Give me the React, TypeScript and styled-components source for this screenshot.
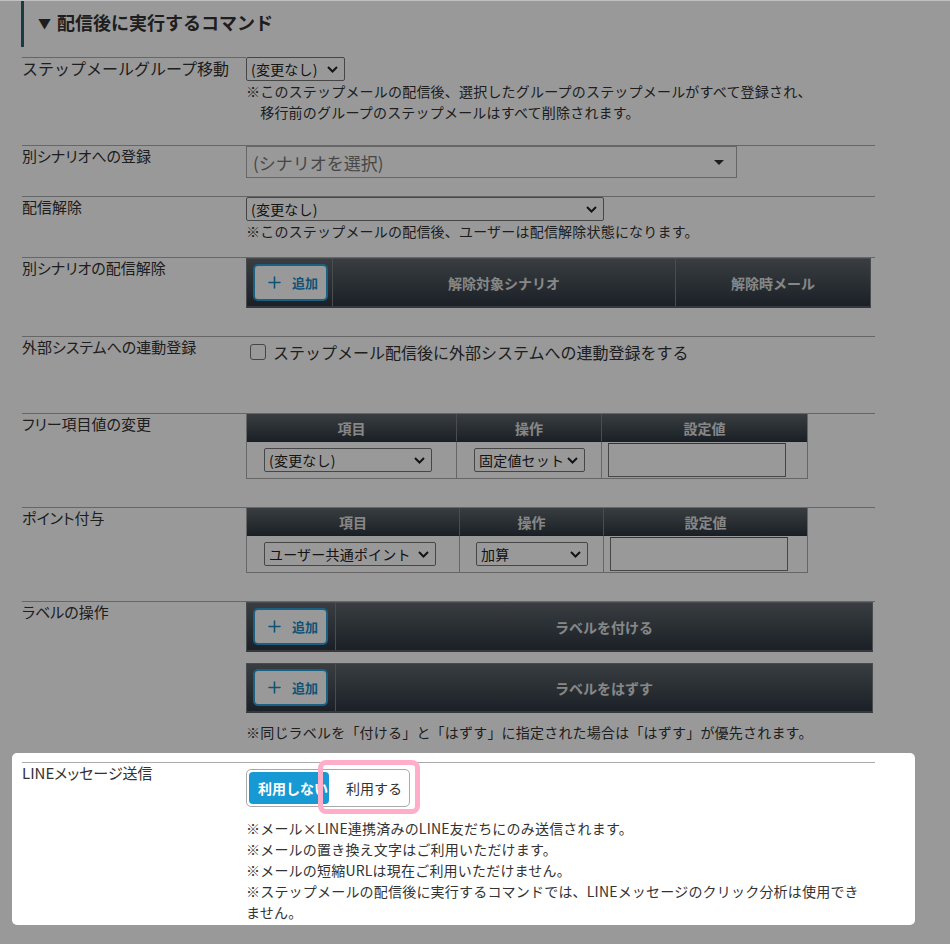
import React from "react";
import styled, { createGlobalStyle } from "styled-components";
import { Plus } from "lucide-react";

const Global = createGlobalStyle`
  html, body { margin: 0; padding: 0; background: #fff; }
  body {
    font-family: "Noto Sans CJK JP", "Noto Sans", sans-serif;
    color: #333;
  }
  #root { min-height: 944px; }
`;

const TopEdge = styled.div`
  position: relative;
  z-index: 2;
  height: 1px;
  background: #c0c0c0;
`;

const Page = styled.div`
  width: 853px;
  margin-left: 22px;
  padding-bottom: 20px;
`;

const Heading = styled.h2`
  margin: 0 0 10px -1px;
  height: 46px;
  box-sizing: border-box;
  border-left: 3px solid #31606e;
  padding: 0 0 4px 14px;
  display: flex;
  align-items: center;
  gap: 6px;
  font-size: 18px;
  font-weight: bold;
  color: #333;
  line-height: 1;
`;

const Tri = styled.span`
  font-size: 13px;
  color: #333;
`;

const Row = styled.div<{ $pb: number; $noLine?: boolean }>`
  display: grid;
  grid-template-columns: 224px 1fr;
  border-top: ${(p) => (p.$noLine ? "none" : "1px solid #aaa")};
  padding-bottom: ${(p) => p.$pb}px;
`;

const Label = styled.div<{ $big?: boolean; $line?: boolean }>`
  font-size: ${(p) => (p.$big ? 16 : 15)}px;
  font-feature-settings: ${(p) => (p.$big ? "normal" : '"palt"')};
  line-height: 20px;
  padding-top: 0;
  color: #333;
  border-top: ${(p) => (p.$line ? "1px solid #aaa" : "none")};
`;

const Cell = styled.div<{ $pt?: number }>`
  padding-top: ${(p) => p.$pt ?? 0}px;
  display: flex;
  flex-direction: column;
  align-items: flex-start;
`;

const SelectBox = styled.div<{ $w: number }>`
  box-sizing: border-box;
  width: ${(p) => p.$w}px;
  height: 24px;
  border: 1px solid #767676;
  border-radius: 2px;
  background: #fff;
  display: flex;
  align-items: center;
  justify-content: space-between;
  padding: 0 6px 0 4px;
  font-size: 14px;
  letter-spacing: 0.2px;
  color: #222;
  white-space: nowrap;
  overflow: hidden;
`;

const Select2Box = styled.div`
  box-sizing: border-box;
  width: 491px;
  height: 32px;
  border: 1px solid #aaa;
  background: #fff;
  display: flex;
  align-items: center;
  justify-content: space-between;
  padding: 0 12px 0 6px;
  font-size: 17px;
  color: #777;
`;

const Caret = styled.span`
  width: 0;
  height: 0;
  border-left: 5px solid transparent;
  border-right: 5px solid transparent;
  border-top: 5px solid #333;
`;

const Note = styled.div<{ $mt?: number }>`
  margin-top: ${(p) => p.$mt ?? 0}px;
  font-size: 14px;
  letter-spacing: 0.2px;
  line-height: 21px;
  color: #333;
`;

const CheckLine = styled.label`
  display: flex;
  align-items: center;
  gap: 7px;
  padding-left: 4px;
  font-size: 16px;
  line-height: 24px;
  color: #333;
`;

const CheckBox = styled.span`
  box-sizing: border-box;
  width: 16px;
  height: 16px;
  border: 1.5px solid #767676;
  border-radius: 3px;
  background: #fff;
`;

const DarkBar = styled.div<{ $cols: string; $w: number }>`
  box-sizing: border-box;
  width: ${(p) => p.$w}px;
  height: 50px;
  display: grid;
  grid-template-columns: ${(p) => p.$cols};
  background: linear-gradient(#60676d, #2c3740);
  border: 1px solid #7a7f84;
  border-bottom: 2px solid #5a5f63;
`;

const DarkCell = styled.div<{ $first?: boolean }>`
  display: flex;
  align-items: center;
  justify-content: ${(p) => (p.$first ? "flex-start" : "center")};
  padding-left: ${(p) => (p.$first ? 6 : 0)}px;
  border-left: ${(p) => (p.$first ? "none" : "1px solid #7c8186")};
  color: #e2e2e2;
  font-size: 14px;
  font-weight: bold;
`;

const AddButton = styled.button`
  box-sizing: border-box;
  width: 75px;
  height: 37px;
  border: 2px solid #2aa1db;
  border-radius: 5px;
  background: #fff;
  color: #1c8bc4;
  display: flex;
  align-items: center;
  justify-content: center;
  gap: 8px;
  padding: 0 0 0 2px;
  font-family: inherit;
  font-size: 13px;
  font-weight: bold;
  cursor: pointer;
`;

const BarStack = styled.div`
  display: flex;
  flex-direction: column;
  gap: 11px;
`;

const SmallTable = styled.div<{ $cols: string }>`
  box-sizing: border-box;
  width: 562px;
  display: grid;
  grid-template-columns: ${(p) => p.$cols};
  border-left: 1px solid #aaa;
  border-right: 1px solid #aaa;
`;

const HeadCell = styled.div<{ $first?: boolean }>`
  height: 27px;
  display: flex;
  align-items: center;
  justify-content: center;
  background: linear-gradient(#60676d, #2c3740);
  border-left: ${(p) => (p.$first ? "none" : "1px solid #7c8186")};
  border-bottom: 1px solid #2a3238;
  color: #e2e2e2;
  font-size: 14px;
  font-weight: bold;
`;

const BodyCell = styled.div<{ $first?: boolean; $pl: number }>`
  box-sizing: border-box;
  height: 37px;
  display: flex;
  align-items: center;
  justify-content: flex-start;
  padding-left: ${(p) => p.$pl}px;
  border-left: ${(p) => (p.$first ? "none" : "1px solid #aaa")};
  border-bottom: 1px solid #aaa;
  background: #fff;
`;

const TextInput = styled.div`
  box-sizing: border-box;
  width: 178px;
  height: 34px;
  border: 1px solid #767676;
  border-top-color: #555;
  background: #fff;
`;

const Spotlight = styled.div`
  position: relative;
  z-index: 1;
  margin-left: -10px;
  width: 903px;
  box-sizing: border-box;
  padding: 9px 40px 2px 10px;
  background: #fff;
  border-radius: 5px;
  box-shadow: 0 0 0 4000px rgba(0, 0, 0, 0.4);
`;

const Toggle = styled.div`
  position: relative;
  margin-top: 6px;
  box-sizing: border-box;
  width: 164px;
  height: 38px;
  border: 1px solid #aaa;
  border-radius: 5px;
  padding: 2px;
  display: flex;
  align-items: center;
  background: #fff;
`;

const ToggleOn = styled.button`
  box-sizing: border-box;
  width: 80px;
  height: 32px;
  border: none;
  border-radius: 4px;
  background: #1799d4;
  color: #fff;
  font-family: inherit;
  font-size: 14px;
  font-weight: bold;
  white-space: nowrap;
  overflow: hidden;
  text-align: left;
  padding: 0 0 0 9px;
`;

const ToggleOff = styled.button`
  flex: 1;
  height: 32px;
  border: none;
  background: transparent;
  color: #333;
  font-family: inherit;
  font-size: 14px;
  padding: 0 0 0 17px;
  text-align: left;
`;

const PinkFrame = styled.span`
  position: absolute;
  left: 71px;
  top: -10px;
  width: 102px;
  height: 54px;
  box-sizing: border-box;
  border: 5px solid #ffadc9;
  border-radius: 8px;
  pointer-events: none;
`;

const Chevron = () => (
  <svg width="11" height="7" viewBox="0 0 11 7">
    <polyline points="1,1 5.5,5.5 10,1" fill="none" stroke="#222" strokeWidth="2" />
  </svg>
);

const Sel = ({ w, text }: { w: number; text: string }) => (
  <SelectBox $w={w}>
    <span>{text}</span>
    <Chevron />
  </SelectBox>
);

const Add = () => (
  <AddButton>
    <Plus size={19} strokeWidth={2} />
    <span>追加</span>
  </AddButton>
);

export default function App() {
  return (
    <>
      <Global />
      <TopEdge />
      <Page>
        <Heading>
          <Tri>▼</Tri>
          <span>配信後に実行するコマンド</span>
        </Heading>

        <Row $pb={22} $noLine>
          <Label $big $line>ステップメールグループ移動</Label>
          <Cell>
            <Sel w={99} text="(変更なし)" />
            <Note>
              {"※このステップメールの配信後、選択したグループのステップメールがすべて登録され、"}
              <br />
              {"\u3000移行前のグループのステップメールはすべて削除されます。"}
            </Note>
          </Cell>
        </Row>

        <Row $pb={18}>
          <Label>別シナリオへの登録</Label>
          <Cell>
            <Select2Box>
              <span>(シナリオを選択)</span>
              <Caret />
            </Select2Box>
          </Cell>
        </Row>

        <Row $pb={15}>
          <Label>配信解除</Label>
          <Cell>
            <Sel w={358} text="(変更なし)" />
            <Note>※このステップメールの配信後、ユーザーは配信解除状態になります。</Note>
          </Cell>
        </Row>

        <Row $pb={28}>
          <Label>別シナリオの配信解除</Label>
          <Cell>
            <DarkBar $w={625} $cols="85px 343px 1fr">
              <DarkCell $first>
                <Add />
              </DarkCell>
              <DarkCell>解除対象シナリオ</DarkCell>
              <DarkCell>解除時メール</DarkCell>
            </DarkBar>
          </Cell>
        </Row>

        <Row $pb={49}>
          <Label>外部システムへの連動登録</Label>
          <Cell $pt={3}>
            <CheckLine>
              <CheckBox />
              ステップメール配信後に外部システムへの連動登録をする
            </CheckLine>
          </Cell>
        </Row>

        <Row $pb={28}>
          <Label>フリー項目値の変更</Label>
          <Cell>
            <SmallTable $cols="209px 145px 1fr">
              <HeadCell $first>項目</HeadCell>
              <HeadCell>操作</HeadCell>
              <HeadCell>設定値</HeadCell>
              <BodyCell $first $pl={17}>
                <Sel w={168} text="(変更なし)" />
              </BodyCell>
              <BodyCell $pl={17}>
                <Sel w={111} text="固定値セット" />
              </BodyCell>
              <BodyCell $pl={6}>
                <TextInput />
              </BodyCell>
            </SmallTable>
          </Cell>
        </Row>

        <Row $pb={28}>
          <Label>ポイント付与</Label>
          <Cell>
            <SmallTable $cols="212px 144px 1fr">
              <HeadCell $first>項目</HeadCell>
              <HeadCell>操作</HeadCell>
              <HeadCell>設定値</HeadCell>
              <BodyCell $first $pl={17}>
                <Sel w={172} text="ユーザー共通ポイント" />
              </BodyCell>
              <BodyCell $pl={16}>
                <Sel w={112} text="加算" />
              </BodyCell>
              <BodyCell $pl={6}>
                <TextInput />
              </BodyCell>
            </SmallTable>
          </Cell>
        </Row>

        <Row $pb={10}>
          <Label>ラベルの操作</Label>
          <Cell>
            <BarStack>
              <DarkBar $w={627} $cols="88px 1fr">
                <DarkCell $first>
                  <Add />
                </DarkCell>
                <DarkCell>ラベルを付ける</DarkCell>
              </DarkBar>
              <DarkBar $w={627} $cols="88px 1fr">
                <DarkCell $first>
                  <Add />
                </DarkCell>
                <DarkCell>ラベルをはずす</DarkCell>
              </DarkBar>
            </BarStack>
            <Note $mt={9}>
              ※同じラベルを「付ける」と「はずす」に指定された場合は「はずす」が優先されます。
            </Note>
          </Cell>
        </Row>

        <Spotlight>
          <Row $pb={0}>
            <Label>LINEメッセージ送信</Label>
            <Cell>
              <Toggle>
                <ToggleOn>利用しない</ToggleOn>
                <ToggleOff>利用する</ToggleOff>
                <PinkFrame />
              </Toggle>
              <Note $mt={11}>
                ※メール×LINE連携済みのLINE友だちにのみ送信されます。
                <br />
                ※メールの置き換え文字はご利用いただけます。
                <br />
                ※メールの短縮URLは現在ご利用いただけません。
                <br />
                ※ステップメールの配信後に実行するコマンドでは、LINEメッセージのクリック分析は使用でき
                <br />
                ません。
              </Note>
            </Cell>
          </Row>
        </Spotlight>
      </Page>
    </>
  );
}
